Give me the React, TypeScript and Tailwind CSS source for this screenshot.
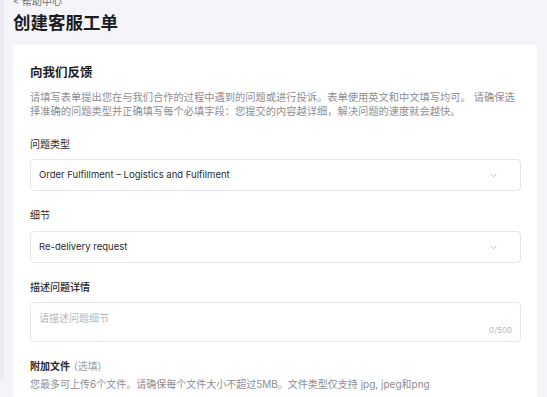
import React from "react";

function Chevron() {
  return (
    <svg width="9" height="9" viewBox="0 0 10 10" fill="none">
      <path d="M2 3.5 L5 6.5 L8 3.5" stroke="#b5b5bd" strokeWidth="1" strokeLinecap="round" strokeLinejoin="round" />
    </svg>
  );
}

function Select({ value }: { value: string }) {
  return (
    <div className="flex h-[32px] items-center justify-between rounded-[4px] border border-[#e6e6ea] bg-white pl-[8px] pr-[22px]">
      <span className="text-[9.5px] text-[#2a2a2e]">{value}</span>
      <Chevron />
    </div>
  );
}

export default function App() {
  return (
    <div
      className="flex h-[397px] w-[547px] overflow-hidden bg-[#f5f5f9]"
      style={{ fontFamily: 'Inter, "Noto Sans CJK SC", sans-serif' }}
    >
      <div className="h-[380px] w-[4px] shrink-0 bg-[#ececf0]" />
      <div className="flex w-[533px] flex-col pl-[9px]">
        <div className="-mt-[5px] flex items-center gap-[3px] text-[10px] leading-[12px] text-[#6b6b70]">
          <span className="text-[9px]">&lt;</span>
          <span>帮助中心</span>
        </div>
        <h1 className="mt-[4px] text-[17.5px] font-bold leading-[24px] text-[#1c1c1f]">创建客服工单</h1>
        <div className="mt-[10px] flex-1 rounded-t-[4px] bg-white pl-[17px] pr-[16px] pt-[18px]">
          <h2 className="text-[12.5px] font-bold leading-[20px] text-[#1c1c1f]">向我们反馈</h2>
          <p className="mt-[7px] pr-[4px] text-[10.25px] leading-[14px] text-[#8e8e94]">
            请填写表单提出您在与我们合作的过程中遇到的问题或进行投诉。表单使用英文和中文填写均可。 请确保选择准确的问题类型并正确填写每个必填字段：您提交的内容越详细，解决问题的速度就会越快。
          </p>
          <div className="mt-[19px] text-[10px] leading-[14px] text-[#2a2a2e]">问题类型</div>
          <div className="mt-[8px]">
            <Select value="Order Fulfillment – Logistics and Fulfilment" />
          </div>
          <div className="mt-[17px] text-[10px] leading-[14px] text-[#2a2a2e]">细节</div>
          <div className="mt-[9px]">
            <Select value="Re-delivery request" />
          </div>
          <div className="mt-[17px] text-[10px] font-medium leading-[14px] text-[#2a2a2e]">描述问题详情</div>
          <div className="mt-[8px] flex h-[40px] flex-col rounded-[4px] border border-[#e6e6ea] bg-white pl-[8px] pr-[8px] pt-[8px]">
            <span className="text-[10px] leading-[14px] text-[#b8b8bd]">请描述问题细节</span>
            <span className="self-end text-[8px] leading-[10px] text-[#b8b8bd]">0/500</span>
          </div>
          <div className="mt-[17px] text-[10px] leading-[14px]">
            <span className="font-semibold text-[#2a2a2e]">附加文件</span>
            <span className="ml-[4px] text-[#a0a0a6]">(选填)</span>
          </div>
          <div className="mt-[4px] text-[10px] leading-[14px] text-[#8e8e94]">
            您最多可上传6个文件。请确保每个文件大小不超过5MB。文件类型仅支持 jpg, jpeg和png
          </div>
          <div className="mt-[4px] text-[10px] leading-[14px] text-[#8e8e94]">上传文件 最多6个</div>
        </div>
      </div>
    </div>
  );
}
